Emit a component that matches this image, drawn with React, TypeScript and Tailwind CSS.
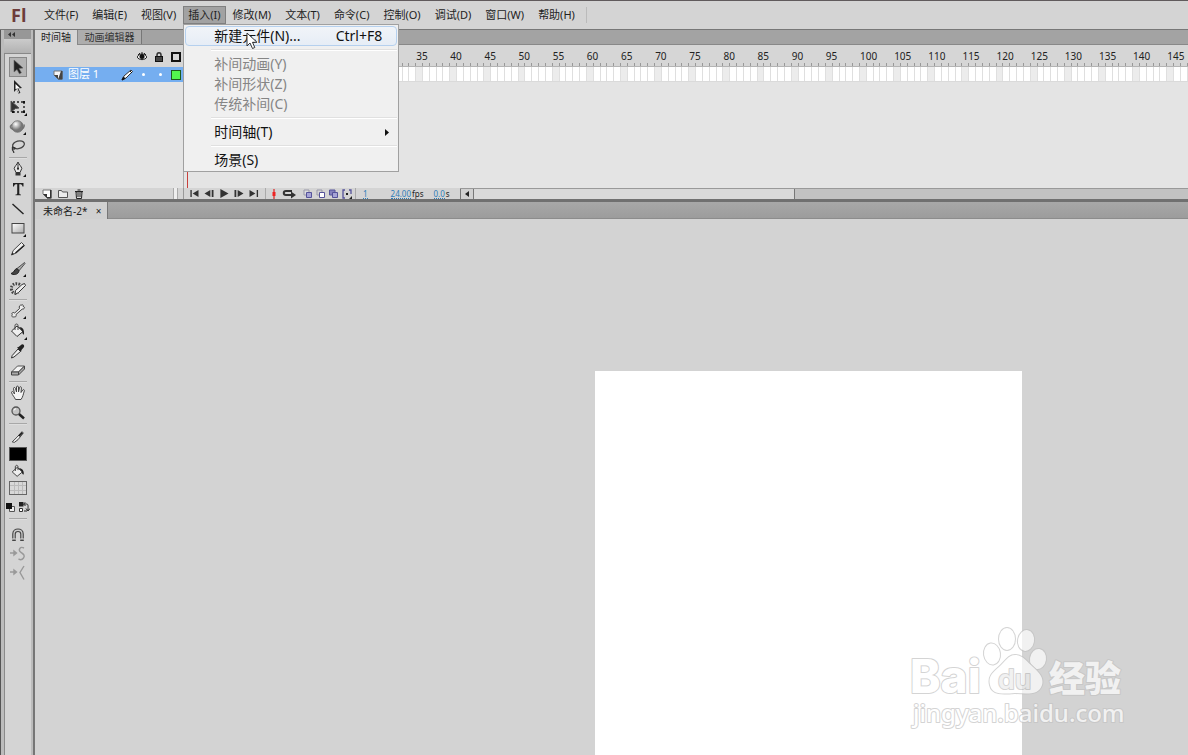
import type { ReactNode } from 'react';
import clsx from 'clsx';

const menus = [
    '文件(F)',
    '编辑(E)',
    '视图(V)',
    '插入(I)',
    '修改(M)',
    '文本(T)',
    '命令(C)',
    '控制(O)',
    '调试(D)',
    '窗口(W)',
    '帮助(H)',
];

const insertMenu = [
    [{ label: '新建元件(N)...', shortcut: 'Ctrl+F8', active: true }],
    [
        { label: '补间动画(Y)', disabled: true },
        { label: '补间形状(Z)', disabled: true },
        { label: '传统补间(C)', disabled: true },
    ],
    [{ label: '时间轴(T)', submenu: true }],
    [{ label: '场景(S)' }],
] as { label: string; shortcut?: string; active?: boolean; disabled?: boolean; submenu?: boolean }[][];

const frames = Array.from({ length: 147 }, (_, i) => i + 1);

function Glyph({ children, className = 'size-[18px]', box = 18 }: { children: ReactNode; className?: string; box?: number }) {
    return (
        <svg className={clsx('shrink-0', className)} viewBox={`0 0 ${box} ${box}`} fill="none" aria-hidden="true">
            {children}
        </svg>
    );
}

const corner = <path d="M17 14v3h-3z" fill="#111" />;

const toolGroups: { name: string; icon: ReactNode }[][] = [
    [
        {
            name: 'Selection',
            icon: <path d="M5 2l9 8-4 .4 2.4 4.4-2 1L8 11.5 5 14z" fill="#222" stroke="#666" strokeWidth=".6" />,
        },
        {
            name: 'Subselection',
            icon: (
                <>
                    <path d="M5 2l8 8-3.6.4 2 4.4-1.8.9-2-4.4L5 14z" fill="#222" />
                    <path d="M6.500 6l4.500 4.200-2.800.2 2 4-.8.4-2-4.400-.9.8z" fill="#fff" />
                </>
            ),
        },
        {
            name: 'Free Transform',
            icon: (
                <>
                    <path d="M2 3l8 7-3.5.5L2 14z" fill="#333" stroke="#555" />
                    <path d="M4 4h12M4 14h11M15 4v11" stroke="#222" strokeDasharray="2 2" strokeWidth="1.4" />
                    <path d="M14 3h2v2h-2zM14 13h2v2h-2zM3 13h2v2H3z" fill="#111" />
                    <path d="M18 15v3h-3z" fill="#111" />
                </>
            ),
        },
        {
            name: '3D Rotation',
            icon: (
                <>
                    <path d="M3 6.500C0 8.500 1 11.500 8 11.500s8-3 7-5" stroke="#777" strokeWidth="1.500" />
                    <circle cx="8.5" cy="8.5" r="5.8" fill="url(#ball)" stroke="#666" strokeWidth=".7" />
                    {corner}
                </>
            ),
        },
        {
            name: 'Lasso',
            icon: (
                <>
                    <ellipse cx="9.5" cy="6.8" rx="6" ry="3.8" transform="rotate(-15 9.5 6.8)" stroke="#444" strokeWidth="1.3" />
                    <path d="M4 8.5c-2 2 1 3.6 2 2.2.7-1-2.2-1.9-2.6.1-.4 2 1.8 2 1.4 4.2" stroke="#333" strokeWidth="1.2" />
                </>
            ),
        },
    ],
    [
        {
            name: 'Pen',
            icon: (
                <>
                    <path d="M9 2c.8 2.3 3.5 4.5 3.8 6.5L11 12.5H7L5.200 8.500C5.500 6.500 8.200 4.300 9 2z" fill="#e8e8e8" stroke="#333" />
                    <path d="M9 3v5" stroke="#333" />
                    <circle cx="9" cy="8.700" r="1.100" fill="#222" />
                    <path d="M6.500 12.500h5v3h-5z" fill="#333" />
                    {corner}
                </>
            ),
        },
        {
            name: 'Text',
            icon: <path d="M4 3h10.500v3.500h-1c-.3-1.700-.8-2.200-3.200-2.200V13c0 1.300.4 1.500 1.700 1.600v.6H6.500v-.6c1.300-.1 1.700-.3 1.700-1.600V4.300C5.800 4.300 5.300 4.800 5 6.500H4z" fill="#222" />,
        },
        { name: 'Line', icon: <path d="M3.500 4l11 10" stroke="#222" strokeWidth="1.400" /> },
        {
            name: 'Rectangle',
            icon: (
                <>
                    <rect x="3" y="3.500" width="12" height="9.500" fill="url(#sheet)" stroke="#444" />
                    {corner}
                </>
            ),
        },
        {
            name: 'Pencil',
            icon: (
                <>
                    <path d="M12.500 2.500L15.500 5.500 7 13l-4.500 2 1.700-4.500z" fill="#f0f0f0" stroke="#444" />
                    <path d="M2.500 15l1-2.600 1.500 1.500zM7 13.500l8.500-7.500-1-1L6 12.500z" fill="#222" />
                </>
            ),
        },
        {
            name: 'Brush',
            icon: (
                <>
                    <path d="M15.500 2.500L8 8.500l2 2.300 6-7.300z" fill="#aaa" stroke="#333" strokeWidth=".8" />
                    <path d="M8 8.500C5 9 5.500 13 2 13.500c2 1.700 7.500 1.500 8-2.700z" fill="#444" stroke="#222" />
                    {corner}
                </>
            ),
        },
        {
            name: 'Deco',
            icon: (
                <>
                    <path d="M11 4.500C6 2 1.500 5.500 2.500 9.500c.7 3.500 3.500 4.500 6.500 2.500" stroke="#444" strokeWidth="3" strokeDasharray="1.600 1.300" />
                    <path d="M15.500 3.500l1 2-7 7-3.500 2 .5-4L13 4.500z" fill="#eee" stroke="#333" />
                </>
            ),
        },
    ],
    [
        {
            name: 'Bone',
            icon: (
                <>
                    <path d="M10.500 6.500c-1-2 .7-4 2-3.300 0-1 2.200-.6 1.700 1.300 2 .1 1.500 3-1 2.600L7 12.500c.7 2-1 3.200-2 2-1 1.500-3-.2-1.700-1.800-1.500-1.500 1-3 2.400-1.700z" fill="#eee" stroke="#444" />
                    {corner}
                </>
            ),
        },
        {
            name: 'Paint Bucket',
            icon: (
                <>
                    <path d="M8 4l6 5.500-6 5L2.500 9z" fill="#eee" stroke="#333" />
                    <path d="M6 8V3.500C6 1.500 9 1.500 9 3.500V8" stroke="#444" />
                    <path d="M10 5c4 0 5.500 3 5 7.500-1.700 0-1.500-2.500-2-3.500z" fill="#222" />
                    <path d="M18 15v3h-3z" fill="#111" />
                </>
            ),
        },
        {
            name: 'Eyedropper',
            icon: (
                <>
                    <path d="M9 7l2.500 2.500L5 15l-2.500 1 .7-2.500z" fill="#eee" stroke="#333" />
                    <path d="M8 5.500l1.500-.5L12 3c1-1.800 4-.5 3 2l-2.500 3-.5 2z" fill="#222" />
                </>
            ),
        },
        {
            name: 'Eraser',
            icon: (
                <>
                    <path d="M8.500 4h7l-6 6H2.500z" fill="#f4f4f4" stroke="#555" />
                    <path d="M2.500 10h7v3h-7zM9.500 13l6-6V4l-6 6z" fill="#aaa" stroke="#444" />
                </>
            ),
        },
    ],
    [
        {
            name: 'Hand',
            icon: <path d="M6.500 15.500C5.500 13 3.500 11.500 2.500 8.500c0-1.200 1.500-1.200 2 0l1 1.500-1-5.500c0-1.300 1.700-1.300 2 0L7.500 8V3c0-1.200 1.800-1.200 2 0v5l1-4.500c.3-1.200 2-.9 1.900.4L12 8.500l1.700-2.500c.7-1 2-.3 1.600.9-1 3-1.300 6-3.300 8.600z" fill="#f4f4f4" stroke="#444" />,
        },
        {
            name: 'Zoom',
            icon: (
                <>
                    <circle cx="7" cy="7" r="4" fill="#c4c4c4" stroke="#555" strokeWidth="1.300" />
                    <path d="M10 10l5 4.500" stroke="#222" strokeWidth="2.500" />
                    <path d="M5 6.500a2 2 0 0 1 2-1.700" stroke="#fff" />
                </>
            ),
        },
    ],
];

function Separator() {
    return <div className="mx-1 h-[2px] self-stretch border-t border-[#a8a8a8] bg-[#dedede]" />;
}

function ToolBar() {
    return (
        <aside className="flex w-[35px] shrink-0 flex-col border-r-2 border-l border-r-[#767676] border-l-[#555] bg-[#bcbcbc] pr-[2px] pl-[3px]">
            <button aria-label="Collapse panel" className="flex h-[9px] shrink-0 items-center bg-[#979797] pl-1">
                <svg className="h-[5px] w-[7px]" viewBox="0 0 7 5" fill="#333" aria-hidden="true">
                    <path d="M3 0v5L0 2.500zM7 0v5L4 2.500z" />
                </svg>
            </button>
            <div className="h-[15px] shrink-0 border-b border-[#888] bg-linear-to-b from-[#cbcbcb] to-[#b2b2b2]" />
            <div className="flex flex-1 flex-col items-center border-l border-[#8a8a8a] bg-[#d4d4d4] pt-[3px]">
                {toolGroups.map((group, index) => (
                    <div key={index} className="flex flex-col items-center self-stretch">
                        {group.map((tool) => (
                            <button
                                key={tool.name}
                                aria-label={tool.name}
                                className={clsx(
                                    'flex h-5 w-[18px] items-center justify-center',
                                    tool.name === 'Selection' && 'border border-[#888] bg-[#b4b4b4]'
                                )}
                            >
                                <Glyph>{tool.icon}</Glyph>
                            </button>
                        ))}
                        <Separator />
                    </div>
                ))}

                {/* Colours */}
                <div className="flex flex-col items-center gap-[2px] pt-1 pb-[3px]">
                    <Glyph className="size-4">
                        <path d="M13.500 3l1.500 1.500L9 12l-4 3-2.500-.5L8 9z" fill="#eee" stroke="#333" />
                        <path d="M10 8l4-4" stroke="#222" strokeWidth="2" />
                    </Glyph>
                    <button aria-label="Stroke colour" className="h-[14px] w-[18px] border border-[#555] bg-black" />
                    <Glyph className="size-4">
                        <path d="M8 5l6 5-6 5-5.500-5z" fill="#eee" stroke="#333" />
                        <path d="M6 9V4.500C6 2 9 2 9 4.500V8" stroke="#333" />
                        <path d="M10 6c4 0 6 3 5.500 7-2 0-2-2.500-2.500-3.500z" fill="#222" />
                    </Glyph>
                    <button aria-label="Fill colour" className="h-[14px] w-[18px] border border-[#666] bg-[#d8d8d8]">
                        <svg className="size-full" viewBox="0 0 16 12" stroke="#bbb" aria-hidden="true">
                            <path d="M4.500 0v12M8.500 0v12M12.500 0v12M0 3.500h16M0 8.500h16" />
                        </svg>
                    </button>
                    <div className="flex gap-[3px] pt-[5px]">
                        <button aria-label="Black and white">
                            <Glyph className="size-[10px]" box={10}>
                                <path d="M3.500 3.500h5v5h-5z" fill="#eee" stroke="#555" />
                                <path d="M0 0h6v6H0z" fill="#111" />
                            </Glyph>
                        </button>
                        <button aria-label="Swap colours">
                            <Glyph className="size-[11px]" box={11}>
                                <path d="M0 0h4.500v4.500H0z" fill="#222" />
                                <path d="M.5 6.500h3v3h-3z" fill="#fff" stroke="#333" />
                                <path d="M5 2h2.500C9.500 2 9 4 9 8M7 6.500L9 9l2-2.500M6.500.2L4.500 2l2 2M5 9h3" stroke="#222" />
                            </Glyph>
                        </button>
                    </div>
                </div>
                <div className="self-stretch pt-[2px]">
                    <Separator />
                </div>

                {/* Tool options */}
                <div className="flex flex-col items-center gap-px pt-[6px]">
                    <button aria-label="Snap to objects">
                        <Glyph>
                            <path d="M5 15V8c0-5 8-5 8 0v7" stroke="#444" strokeWidth="3.600" />
                            <path d="M5 13V8c0-5 8-5 8 0v5" stroke="#ccc" strokeWidth="1.300" />
                            <path d="M3 13h4M11 13h4" stroke="#ddd" />
                        </Glyph>
                    </button>
                    <button aria-label="Smooth" disabled>
                        <Glyph>
                            <path d="M1 8h6M5 6l2.500 2L5 10zM15 3c-4-2-6 2-3.500 4s5 3 3 6-4 1.500-5 1" stroke="#999" strokeWidth="1.400" />
                        </Glyph>
                    </button>
                    <button aria-label="Straighten" disabled>
                        <Glyph>
                            <path d="M1 8h6M5 6l2.500 2L5 10zM15 2l-4 6.500 4 7" stroke="#999" strokeWidth="1.400" />
                        </Glyph>
                    </button>
                </div>
            </div>
        </aside>
    );
}

function InsertMenu() {
    return (
        <div role="menu" className="absolute top-[18px] left-0 z-20 w-[216px] border border-[#a0a0a0] bg-[#f0f0f0] p-px text-sm">
            {insertMenu.map((group, index) => (
                <div key={index}>
                    {index > 0 && (
                        <div className="flex h-2 items-center pl-[26px]">
                            <div className="h-[2px] flex-1 border-t border-[#e0e0e0] bg-white" />
                        </div>
                    )}
                    {group.map((item) => (
                        <button
                            key={item.label}
                            role="menuitem"
                            disabled={item.disabled}
                            className={clsx(
                                'flex h-5 w-full items-center justify-between rounded-sm border pr-[14px] pl-7 leading-[18px] whitespace-nowrap',
                                item.active ? 'border-[#b5d0ee] bg-linear-to-b from-[#f1f4f8] to-[#e6edf6]' : 'border-transparent',
                                item.disabled ? 'text-[#858585]' : 'text-[#111]'
                            )}
                        >
                            <span>{item.label}</span>
                            {item.shortcut && <span>{item.shortcut}</span>}
                            {item.submenu && (
                                <svg className="mr-[-7px] h-[7px] w-1" viewBox="0 0 4 7" fill="#111" aria-hidden="true">
                                    <path d="M0 0v7l4-3.500z" />
                                </svg>
                            )}
                        </button>
                    ))}
                </div>
            ))}
            {/* Mouse pointer */}
            <svg className="absolute top-[7px] left-[62px] h-[18px] w-3" viewBox="0 0 12 18" aria-hidden="true">
                <path d="M1 1v13l3-3 2.500 5.500 2.300-1L6.500 10.300h4.500z" fill="#fff" stroke="#333" />
            </svg>
        </div>
    );
}

function MenuBar() {
    return (
        <header className="flex h-[29px] shrink-0 items-center border-b border-[#777] bg-[#d4d4d4]">
            <div className="w-[37px] pb-px pl-[11px] font-['Open_Sans','Noto_Sans',sans-serif] text-[18px] leading-6 font-bold text-[#6d3c3a]">Fl</div>
            <nav className="flex h-full items-center">
                {menus.map((name) => {
                    const open = name === '插入(I)';
                    return (
                        <div key={name} className="relative h-[18px]">
                            <button
                                aria-haspopup="menu"
                                aria-expanded={open}
                                className={clsx(
                                    'h-[18px] leading-4 whitespace-nowrap',
                                    open ? 'border border-[#808080] bg-[#a2a2a2] px-1' : 'px-[7px]'
                                )}
                            >
                                {name}
                            </button>
                            {open && <InsertMenu />}
                        </div>
                    );
                })}
                <div className="ml-1 h-4 w-px bg-[#bbb]" />
            </nav>
        </header>
    );
}

function LayerList() {
    return (
        <div className="flex w-[149px] shrink-0 flex-col border-r border-[#aaa] bg-[#e4e4e4]">
            <div className="flex h-[22px] items-center justify-end gap-[7px] bg-[#d6d6d6] pt-[2px] pr-[2px]">
                <Glyph className="size-[10px]" box={10}>
                    <path d="M0 5c2-4 8-4 10 0-2 3.500-8 3.500-10 0z" fill="#eee" stroke="#222" />
                    <circle cx="5" cy="4.500" r="2.500" fill="#111" />
                    <path d="M1 3l2-2M5 2V0M9 3L7 1" stroke="#222" />
                </Glyph>
                <Glyph className="size-[10px]" box={10}>
                    <path d="M3 5V3c0-3 4-3 4 0v2" stroke="#333" strokeWidth="1.500" />
                    <rect x="1.500" y="4.500" width="7" height="5" fill="#444" stroke="#111" />
                </Glyph>
                <div className="size-[10px] border-2 border-[#111]" />
            </div>
            <div className="flex h-[15px] items-center bg-[#75aef0] pr-[2px] text-white">
                <Glyph className="ml-[18px] size-[10px]" box={10}>
                    <path d="M1 1h8v8H5L1 5z" fill="#f6f6f6" stroke="#777" />
                    <path d="M1 5h4v4zM8 1h1.500v8.500H5" fill="#444" />
                </Glyph>
                <span className="ml-[5px] flex-1 pb-[2px] text-[11px] leading-[14px] whitespace-nowrap">图层 1</span>
                <Glyph className="size-3" box={12}>
                    <path d="M10 1l1.500 1.500L5 9l-4 2 2-4z" fill="#fff" stroke="#333" />
                    <path d="M1 11l1.500-3L4 9.500zM9 2l2 2" fill="#111" stroke="#111" />
                </Glyph>
                <span className="ml-[9px] size-[3px] rounded-full bg-white" />
                <span className="ml-[14px] size-[3px] rounded-full bg-white" />
                <span className="ml-[9px] size-[10px] border border-[#1d5c1d] bg-[#53f84e]" />
            </div>
        </div>
    );
}

function FrameGrid() {
    return (
        <div className="relative min-w-0 flex-1 overflow-hidden bg-[#e4e4e4]">
            <div className="flex h-[22px] border-b border-[#b4b4b4] bg-[#d6d6d6]">
                {frames.map((n) => (
                    <div key={n} className="flex min-w-0 flex-1 flex-col justify-between pt-[3px]">
                        <span className="h-[15px] text-[10px] leading-[16px] whitespace-nowrap text-[#222]">{n % 5 === 0 && n}</span>
                        <span className="h-[3px] border-r border-[#999]" />
                    </div>
                ))}
            </div>
            <div className="flex h-[15px] border-b border-[#dadada] bg-white">
                {frames.map((n) => (
                    <div key={n} className={clsx('min-w-0 flex-1 border-r border-[#dfdfdf]', n % 5 === 0 && 'bg-[#ececec]')} />
                ))}
            </div>
            <div className="absolute top-0 left-[3px] h-full w-px bg-[#c8403c]" />
        </div>
    );
}

const playback = [
    { name: 'First frame', d: 'M1 1h1.500v8H1zM10 1v8L3.500 5z' },
    { name: 'Step back', d: 'M6.500 1v8L0 5zM8 1h2v8H8z' },
    { name: 'Play', d: 'M1 0v10l9-5z' },
    { name: 'Step forward', d: 'M0 1h2v8H0zM3.500 1v8L10 5z' },
    { name: 'Last frame', d: 'M0 1v8l6.500-4zM8 1h1.500v8H8z' },
];

function TimelineFooter() {
    return (
        <div className="flex h-[11px] shrink-0 items-stretch bg-[#d4d4d4] text-[8px] leading-[11px]">
            <div className="flex w-[149px] shrink-0 items-center gap-[6px] border-r border-[#999] pl-[7px]">
                <button aria-label="New layer">
                    <Glyph className="size-[10px]" box={10}>
                        <path d="M1 1h8v8H5L1 5z" fill="#fafafa" stroke="#777" />
                        <path d="M1 5h4v4zM8 1h1.500v8.500H5V8h3z" fill="#333" />
                    </Glyph>
                </button>
                <button aria-label="New folder">
                    <Glyph className="size-[10px]" box={10}>
                        <path d="M.5 8.500v-7h3l1 1.500h5v5.500z" fill="#ececec" stroke="#555" />
                    </Glyph>
                </button>
                <button aria-label="Delete">
                    <Glyph className="size-[10px]" box={10}>
                        <path d="M2 3h6l-.5 6.500h-5z" fill="#ddd" stroke="#222" />
                        <path d="M1 2.500h8M3.500 1h3M4 4v4M6 4v4" stroke="#222" />
                    </Glyph>
                </button>
                <span className="mr-[5px] ml-auto h-full w-[5px] border-x border-[#aaa] bg-[#eee]" />
            </div>
            <div className="flex shrink-0 items-center gap-[5px] pl-[5px]">
                {playback.map((item) => (
                    <button key={item.name} aria-label={item.name}>
                        <svg className="h-[9px] w-[10px]" viewBox="0 0 10 10" fill="#333" aria-hidden="true">
                            <path d={item.d} />
                        </svg>
                    </button>
                ))}
            </div>
            <div className="ml-[6px] flex shrink-0 items-center gap-[3px] border-l border-[#aaa] pl-[3px]">
                <button aria-label="Center frame">
                    <Glyph className="size-[10px]" box={10}>
                        <path d="M5 0v10" stroke="#d22" strokeWidth="1.200" />
                        <path d="M3.500 3h3v4h-3z" fill="#e22" />
                    </Glyph>
                </button>
                <button aria-label="Loop">
                    <svg className="h-[10px] w-[15px]" viewBox="0 0 15 10" aria-hidden="true">
                        <path d="M10 2H4C1 2 1 6 4 6h7" fill="none" stroke="#333" strokeWidth="2" />
                        <path d="M9 2.500L14 6l-5 3.500z" fill="#333" />
                    </svg>
                </button>
                <button aria-label="Onion skin" className="ml-[3px]">
                    <Glyph className="size-[10px]" box={10}>
                        <path d="M1 1h5v5H1z" fill="#ddd" stroke="#99a" />
                        <path d="M3.500 3.500h5v5h-5z" fill="#a6a4d6" stroke="#55539a" />
                    </Glyph>
                </button>
                <button aria-label="Onion skin outlines">
                    <Glyph className="size-[10px]" box={10}>
                        <path d="M1 1h5v5H1z" stroke="#99a" />
                        <path d="M3.500 3.500h5v5h-5z" fill="#fff" stroke="#55539a" />
                    </Glyph>
                </button>
                <button aria-label="Edit multiple frames">
                    <Glyph className="size-[10px]" box={10}>
                        <path d="M.5 1h5.500v5H.5z" fill="#8583bd" stroke="#55539a" />
                        <path d="M3.500 3.500h5v5h-5z" fill="#a6a4d6" stroke="#55539a" />
                    </Glyph>
                </button>
                <button aria-label="Modify markers">
                    <Glyph className="size-[10px]" box={10}>
                        <path d="M3 1H1v8h2M7 1h2v4" stroke="#55539a" strokeWidth="1.300" />
                        <path d="M4 4h2v2H4zM10 7v3H7z" fill="#222" />
                    </Glyph>
                </button>
            </div>
            <div className="ml-[3px] flex shrink-0 items-center border-l border-[#aaa] pl-[7px] whitespace-nowrap text-[#222]">
                <button className="h-[11px] border-b border-dotted border-[#2d7db8] text-[#2d7db8]">1</button>
                <button className="ml-[23px] h-[11px] border-b border-dotted border-[#2d7db8] text-[#2d7db8]">24.00</button>
                <span className="ml-px">fps</span>
                <button className="ml-[10px] h-[11px] border-b border-dotted border-[#2d7db8] text-[#2d7db8]">0.0</button>
                <span className="ml-px">s</span>
            </div>
            <div className="ml-[10px] flex flex-1 border-t border-[#999] bg-[#c2c2c2]">
                <button aria-label="Scroll left" className="flex w-[14px] items-center justify-center border-x border-[#777] bg-[#d0d0d0]">
                    <svg className="h-[6px] w-1" viewBox="0 0 4 6" fill="#222" aria-hidden="true">
                        <path d="M4 0v6L0 3z" />
                    </svg>
                </button>
                <div className="w-[321px] border-r border-[#777] bg-[#d9d9d9]" />
            </div>
        </div>
    );
}

function Watermark() {
    return (
        <svg
            className="absolute right-[58px] bottom-[22px] h-[110px] w-[224px] font-['Noto_Sans','Noto_Sans_CJK_SC',sans-serif] opacity-70"
            viewBox="0 0 224 110"
            fill="#fff"
            stroke="#c2c2c2"
            strokeWidth="2"
            strokeLinejoin="round"
            paintOrder="stroke"
        >
            <text x="4" y="70" className="font-['Inter',sans-serif] text-[46px] font-extrabold">Bai</text>
            <ellipse cx="86" cy="31" rx="8" ry="10.500" transform="rotate(-8 86 31)" />
            <ellipse cx="101" cy="16" rx="8" ry="11" />
            <ellipse cx="120" cy="17.500" rx="8" ry="10.500" transform="rotate(10 120 17.500)" />
            <ellipse cx="132" cy="36" rx="8" ry="10" transform="rotate(8 132 36)" />
            <path d="M109 32c-7 0-10 7-16 12-7 6-11 10-9 18 2 10 13 9 25 8 13 1 24 2 27-8 2-8-3-12-9-18-6-5-10-12-18-12z" />
            <text x="92" y="66" fill="#ececec" className="font-['Inter',sans-serif] text-[27px] font-semibold">du</text>
            <text x="143" y="69" className="text-[36px] font-black">经验</text>
            <text x="7" y="99" className="text-[24px] font-medium">jingyan.baidu.com</text>
        </svg>
    );
}

export default function App() {
    return (
        <div className="flex h-screen flex-col overflow-hidden border-t border-[#605a5c] bg-[#d4d4d4] font-['Noto_Sans','Noto_Sans_CJK_SC',sans-serif] text-[11px] text-[#222]">
            <svg className="absolute size-0" aria-hidden="true">
                <radialGradient id="ball" cx=".35" cy=".3">
                    <stop stopColor="#fff" />
                    <stop offset="1" stopColor="#777" />
                </radialGradient>
                <linearGradient id="sheet" x2="1" y2="1">
                    <stop stopColor="#fff" />
                    <stop offset="1" stopColor="#aaa" />
                </linearGradient>
            </svg>
            <MenuBar />
            <div className="flex min-h-0 flex-1">
                <ToolBar />
                <main className="flex min-w-0 flex-1 flex-col">
                    {/* Timeline panel */}
                    <section className="flex h-[172px] shrink-0 flex-col border-b-[3px] border-[#707070]">
                        <div role="tablist" className="flex h-[15px] shrink-0 border-b border-[#888] bg-[#a3a3a3] text-[10px] leading-[15px]">
                            <button role="tab" aria-selected="true" className="-mb-px w-[43px] border-r border-[#888] bg-[#d6d6d6] whitespace-nowrap">
                                时间轴
                            </button>
                            <button role="tab" aria-selected="false" className="w-16 border-r border-[#777] bg-[#adadad] whitespace-nowrap text-[#333]">
                                动画编辑器
                            </button>
                        </div>
                        <div className="flex min-h-0 flex-1">
                            <LayerList />
                            <FrameGrid />
                        </div>
                        <TimelineFooter />
                    </section>

                    {/* Open documents */}
                    <div className="flex h-[17px] shrink-0 border-b border-[#8c8c8c] bg-linear-to-b from-[#a8a8a8] to-[#9c9c9c] text-[10px] leading-4">
                        <div className="-mb-px flex w-[73px] items-center justify-between border-r border-[#777] bg-[#d0d0d0] pr-1 pl-2 whitespace-nowrap">
                            <span>未命名-2*</span>
                            <button aria-label="Close document" className="w-[9px]">×</button>
                        </div>
                    </div>

                    {/* Stage */}
                    <div className="relative min-h-0 flex-1 overflow-hidden bg-[#d3d3d3] pt-[152px]">
                        <div className="ml-[560px] h-full w-[427px] bg-white" />
                        <Watermark />
                    </div>
                </main>
            </div>
        </div>
    );
}
